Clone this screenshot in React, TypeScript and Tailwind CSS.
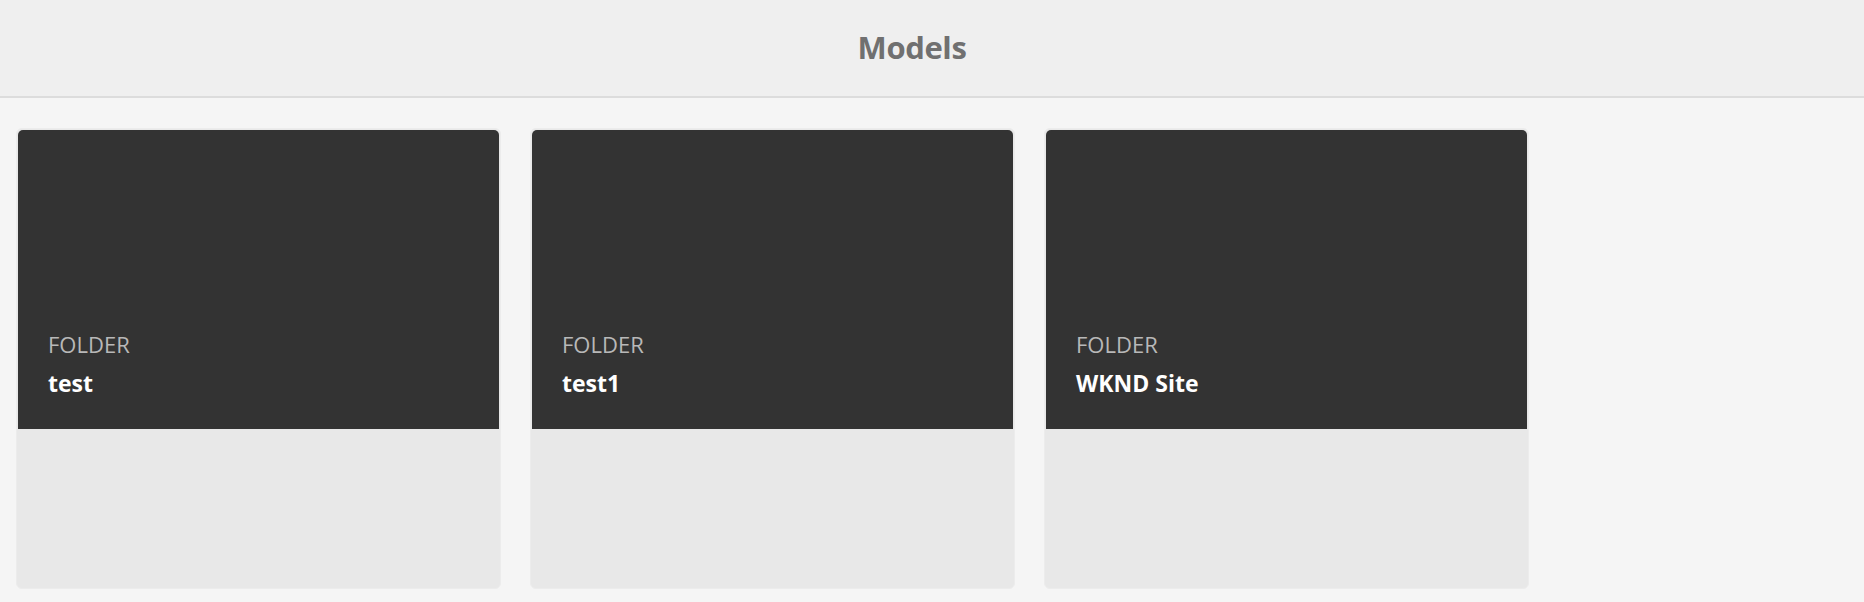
const folders = ['test', 'test1', 'WKND Site'];

function FolderCard({ name }: { name: string }) {
  return (
    <div className="w-[485px] h-[461px] flex flex-col rounded-md bg-[#e8e8e8] border border-[#ececec] px-[1px] pt-[1px] overflow-hidden">
      <div className="h-[299px] bg-[#333333] rounded-t-[5px] flex flex-col justify-end pl-[30px] pb-[34px]">
        <div className="text-[22px] leading-none text-[#b8b8b8]">FOLDER</div>
        <div className="text-[23px] leading-none font-bold text-white mt-[17px]">{name}</div>
      </div>
      <div className="flex-1" />
    </div>
  );
}

export default function App() {
  return (
    <div className="w-[1864px] h-[602px] bg-[#f5f5f5] font-['Open_Sans',sans-serif] overflow-hidden">
      {/* Header */}
      <div className="h-[98px] bg-[#efefef] border-b-2 border-[#dcdcdc] flex items-center justify-center pr-[40px] pb-[2px]">
        <h1 className="text-[31px] font-bold text-[#707070] tracking-[-0.4px]">Models</h1>
      </div>

      {/* Cards */}
      <div className="flex gap-[29px] pl-[16px] pt-[30px]">
        {folders.map(f => (
          <FolderCard key={f} name={f} />
        ))}
      </div>
    </div>
  );
}
